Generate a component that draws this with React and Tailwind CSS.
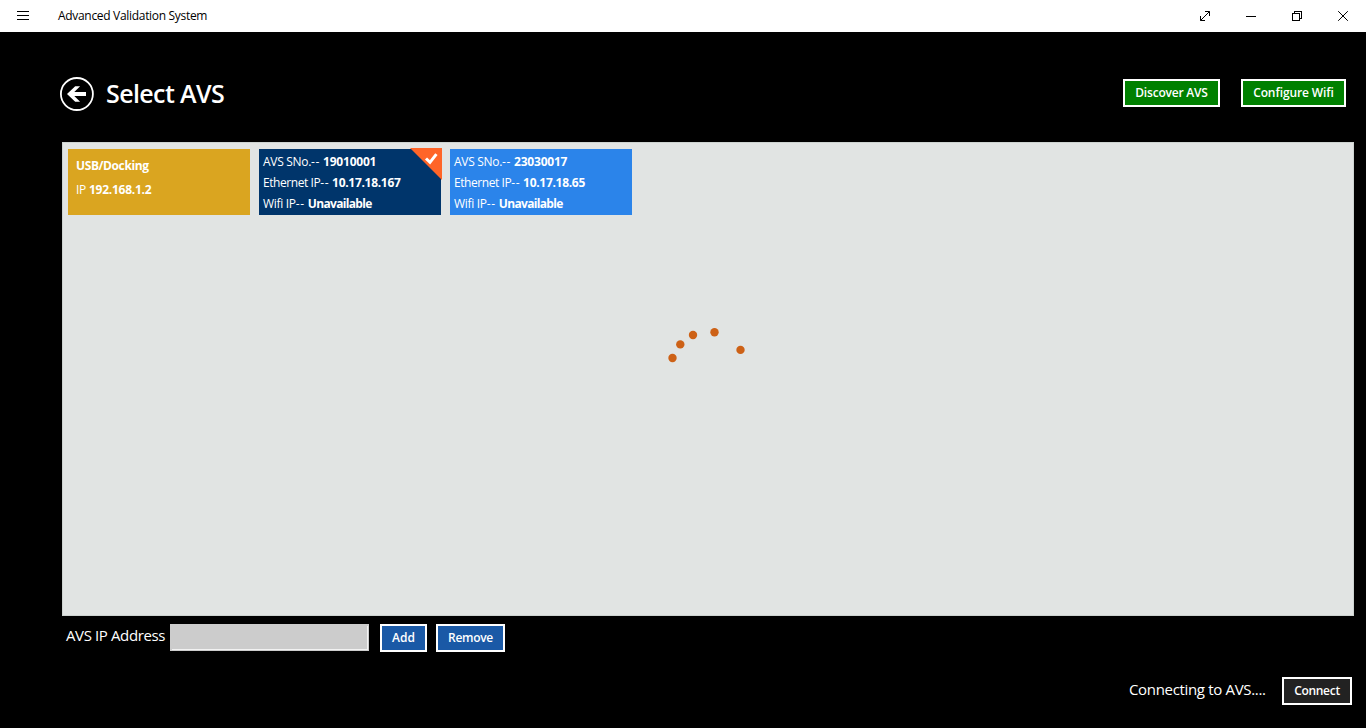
const btn =
  "flex h-7 shrink-0 items-center justify-center border-2 border-white text-[12px] leading-none font-semibold whitespace-nowrap text-white";

function TitleBar() {
  return (
    <header className="flex h-8 shrink-0 items-center bg-white text-black">
      <button className="flex h-8 w-[46px] items-center justify-center" aria-label="Menu">
        <svg width="46" height="32" shapeRendering="crispEdges" fill="#000">
          <path d="M17 11h12v1H17zM17 15h12v1H17zM17 19h12v1H17z" />
        </svg>
      </button>
      <span className="ml-3 text-[12px] leading-4 tracking-[-0.31px]">Advanced Validation System</span>
      <div className="ml-auto flex">
        <svg width="46" height="32" fill="none" stroke="#000">
          <path d="M18.5 20.5L27.5 11.5M23 11.5h4.5V16M18.5 16v4.5H23" />
        </svg>
        <svg width="46" height="32" shapeRendering="crispEdges">
          <path d="M18 16h10v1H18z" />
        </svg>
        <svg width="46" height="32" fill="none" stroke="#000" shapeRendering="crispEdges">
          <path d="M18.5 13.5h7v7h-7zM20.5 13v-1.5h7v7H26" />
        </svg>
        <svg width="46" height="32" fill="none" stroke="#000">
          <path d="M18.2 11.2l9.6 9.6M27.8 11.2l-9.6 9.6" />
        </svg>
      </div>
    </header>
  );
}

function Device({ serial, ip, selected }) {
  return (
    <div
      className={
        "relative h-[66px] w-[182px] pt-[2px] pl-1 text-[12px] leading-[21px] whitespace-nowrap text-white " +
        (selected ? "bg-[#00356b]" : "bg-[#2b84ea]")
      }
    >
      <p className="tracking-[-0.3px]">AVS SNo.<span className="tracking-[0.7px]">--</span> <b className="tracking-[-0.2px]">{serial}</b></p>
      <p className="tracking-[-0.43px]">Ethernet IP<span className="tracking-[0.7px]">--</span> <b className="tracking-[-0.3px]">{ip}</b></p>
      <p className="tracking-[-0.3px]">Wifi IP<span className="tracking-[0.7px]">--</span> <b className="tracking-[-0.65px]">Unavailable</b></p>
      {selected && (
        <svg className="absolute -top-px -right-px" width="32" height="32">
          <path d="M0 0h32v32z" fill="#ff6528" />
          <path d="M16 10.5l4 3.8 6.4-8.2" fill="none" stroke="#fff" strokeWidth="3" />
        </svg>
      )}
    </div>
  );
}

const dots = [[8.5, 29], [16.3, 15.4], [29, 6], [50.5, 3.3], [76.5, 20.9]];

export default function App() {
  return (
    <div className="flex h-[728px] w-[1366px] flex-col overflow-hidden bg-black font-['Open_Sans','Noto_Sans',sans-serif]">
      <TitleBar />
      <div className="flex h-[110px] shrink-0 items-start pt-[44px] pr-5 pl-[59px]">
        <svg width="36" height="36" fill="none">
          <circle cx="17.9" cy="18" r="16" stroke="#fff" strokeWidth="1.8" />
          <path d="M8 18l8.2-7.8h4.9L15.3 16H27v4H15.3l5.8 5.8h-4.9z" fill="#fff" />
        </svg>
        <h1 className="-mt-px ml-[11px] text-[25px] leading-[36px] font-semibold tracking-[-0.6px] text-white">Select AVS</h1>
        <div className="mt-[3px] ml-auto flex gap-[21px]">
          <button className={btn + " w-[97px] bg-[#008000] tracking-[-0.2px]"}>Discover AVS</button>
          <button className={btn + " w-[105px] bg-[#008000] tracking-[-0.1px]"}>Configure Wifi</button>
        </div>
      </div>
      <main className="mr-3 ml-[62px] h-[474px] shrink-0 border border-[#cdd3d0] bg-[#e1e4e3] pt-[6px] pl-[5px]">
        <div className="flex gap-[9px]">
          <div className="h-[66px] w-[182px] bg-[#daa520] pt-[5px] pl-2 text-[12px] leading-6 text-white">
            <p className="tracking-[-0.4px]"><b>USB/Docking</b></p>
            <p className="tracking-[-0.25px]">IP <b>192.168.1.2</b></p>
          </div>
          <Device serial="19010001" ip="10.17.18.167" selected />
          <Device serial="23030017" ip="10.17.18.65" />
        </div>
        <svg className="mt-[114px] ml-[596px] overflow-visible" width="88" height="40" fill="#cd6116">
          {dots.map(([x, y]) => (
            <circle key={x} cx={x} cy={y} r="4.2" />
          ))}
        </svg>
      </main>
      <div className="flex h-9 shrink-0 items-start pt-2 pl-[66px]">
        <label htmlFor="ip" className="-mt-px w-[104px] text-[15px] leading-6 tracking-[-0.38px] whitespace-nowrap text-white">AVS IP Address</label>
        <div className="h-[27px] w-[199px] border border-[#ccc] bg-[#ccc] pt-px pl-px">
          <input id="ip" className="block h-full w-full border-r border-b border-[#f2f2f2] bg-[#ccc] outline-none" />
        </div>
        <button className={btn + " ml-[11px] w-[47px] bg-[#1a59a6]"}>Add</button>
        <button className={btn + " ml-[9px] w-[69px] bg-[#1a59a6] tracking-[-0.3px]"}>Remove</button>
      </div>
      <footer className="flex shrink-0 items-start justify-end pt-[25px] pr-[14px]">
        <span className="w-[153px] text-[15px] leading-6 tracking-[-0.33px] whitespace-nowrap text-white">Connecting to AVS....</span>
        <button className={btn + " w-[70px] bg-[#222] tracking-[-0.3px]"}>Connect</button>
      </footer>
    </div>
  );
}
